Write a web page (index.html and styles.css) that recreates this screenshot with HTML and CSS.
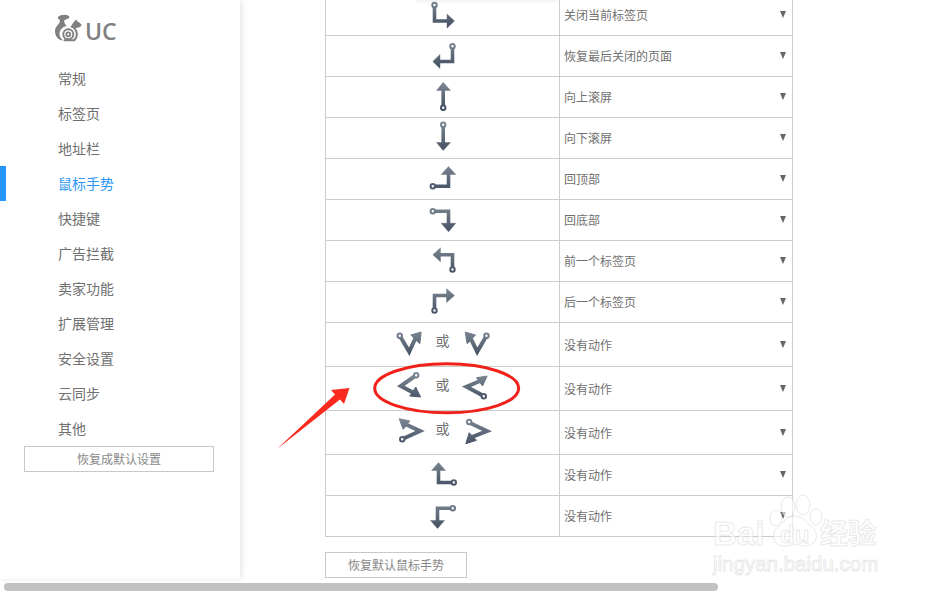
FILE: index.html
```html
<!DOCTYPE html>
<html lang="zh-CN">
<head>
    <meta charset="utf-8">
    <title>UC 设置</title>
    <link rel="stylesheet" href="styles.css">
</head>
<body>
    <svg class="defs" width="0" height="0">
        <defs>
            <linearGradient id="ico" gradientUnits="userSpaceOnUse" x1="0" y1="2" x2="0" y2="30">
                <stop offset="0" stop-color="#7b8693"/>
                <stop offset="1" stop-color="#3f4c5e"/>
            </linearGradient>
        </defs>
    </svg>

    <div class="page">
        <div class="sidebar">
            <div class="logo">
                <svg width="28" height="28" viewBox="0 0 28 28">
                    <!-- tail -->
                    <path d="M4 3 C7 0 14 0 15.500 3 C15.500 5 12 5 10.500 6 C9.500 8 11 10 12.500 12 C8 13 5.500 16 5.500 20 C5.500 23.500 8 26 11 26.800 C4 26.800 1 22 1 17 C1 12 6 10 6 7 C6 5 3 5 4 3 Z" fill="#808080"/>
                    <!-- head -->
                    <path d="M16.500 13 L19 9 C20 8 21 6.500 22 5.500 L23.500 7.500 C25 8 27 10 27.700 11 C27 13 24 14 22 14 C20 14.500 18 14.300 16.500 13 Z" fill="#808080"/>
                    <!-- body rings -->
                    <circle cx="14.300" cy="20.300" r="2" fill="none" stroke="#808080" stroke-width="1.700"/>
                    <circle cx="14.300" cy="20.300" r="5" fill="none" stroke="#808080" stroke-width="1.900"/>
                    <path d="M19.800 13.800 A8.500 8.500 0 0 1 19.800 26.800 M10 26.300 H20" fill="none" stroke="#808080" stroke-width="1.900"/>
                </svg>
                <span class="logo-text">UC</span>
            </div>
            <ul class="nav">
                <li>常规</li>
                <li>标签页</li>
                <li>地址栏</li>
                <li class="active">鼠标手势</li>
                <li>快捷键</li>
                <li>广告拦截</li>
                <li>卖家功能</li>
                <li>扩展管理</li>
                <li>安全设置</li>
                <li>云同步</li>
                <li>其他</li>
            </ul>
            <button class="btn btn-reset-all">恢复成默认设置</button>
        </div>

        <div class="main">
            <table class="gestures">
                <tr>
                    <td class="gesture">
                        <svg class="ico" width="32" height="32" fill="url(#ico)" stroke="url(#ico)">
                            <path class="line" d="M7.500 7V22H21"/><polygon class="head" points="20,15 27.500,22 20,29"/><circle class="dot" cx="7.500" cy="6" r="2.200"/>
                        </svg>
                    </td>
                    <td class="action"><div class="select">关闭当前标签页</div></td>
                </tr>
                <tr>
                    <td class="gesture">
                        <svg class="ico" width="32" height="32" fill="url(#ico)" stroke="url(#ico)">
                            <path class="line" d="M25.500 7V21.500H12"/><polygon class="head" points="13,14.500 5.800,21.500 13,28.500"/><circle class="dot" cx="25.500" cy="6.200" r="2.200"/>
                        </svg>
                    </td>
                    <td class="action"><div class="select">恢复最后关闭的页面</div></td>
                </tr>
                <tr>
                    <td class="gesture">
                        <svg class="ico" width="32" height="32" fill="url(#ico)" stroke="url(#ico)">
                            <path class="line" d="M16.200 9V26"/><polygon class="head" points="9.500,9.500 16.200,1.200 23.500,9.500"/><circle class="dot" cx="16.200" cy="26.800" r="2.200"/>
                        </svg>
                    </td>
                    <td class="action"><div class="select">向上滚屏</div></td>
                </tr>
                <tr>
                    <td class="gesture">
                        <svg class="ico" width="32" height="32" fill="url(#ico)" stroke="url(#ico)">
                            <path class="line" d="M16.200 4V21"/><polygon class="head" points="9.500,20.500 16.200,28.500 23.500,20.500"/><circle class="dot" cx="16.200" cy="2.800" r="2.200"/>
                        </svg>
                    </td>
                    <td class="action"><div class="select">向下滚屏</div></td>
                </tr>
                <tr>
                    <td class="gesture">
                        <svg class="ico" width="32" height="32" fill="url(#ico)" stroke="url(#ico)">
                            <path class="line" d="M7 23.200H21.500V11"/><polygon class="head" points="14.200,11.500 21.500,3.500 28.800,11.500"/><circle class="dot" cx="5.800" cy="23.200" r="2.200"/>
                        </svg>
                    </td>
                    <td class="action"><div class="select">回顶部</div></td>
                </tr>
                <tr>
                    <td class="gesture">
                        <svg class="ico" width="32" height="32" fill="url(#ico)" stroke="url(#ico)">
                            <path class="line" d="M7 7.200H21.500V20"/><polygon class="head" points="14.200,19.200 21.500,27.800 28.800,19.200"/><circle class="dot" cx="5.800" cy="7.200" r="2.200"/>
                        </svg>
                    </td>
                    <td class="action"><div class="select">回底部</div></td>
                </tr>
                <tr>
                    <td class="gesture">
                        <svg class="ico" width="32" height="32" fill="url(#ico)" stroke="url(#ico)">
                            <path class="line" d="M25.500 23V9.800H13"/><polygon class="head" points="13.500,2.800 5.800,9.800 13.500,16.800"/><circle class="dot" cx="25.500" cy="24.500" r="2.200"/>
                        </svg>
                    </td>
                    <td class="action"><div class="select">前一个标签页</div></td>
                </tr>
                <tr>
                    <td class="gesture">
                        <svg class="ico" width="32" height="32" fill="url(#ico)" stroke="url(#ico)">
                            <path class="line" d="M7.500 23V9.500H20"/><polygon class="head" points="19.500,2.500 27.500,9.500 19.500,16.500"/><circle class="dot" cx="7.500" cy="24.500" r="2.200"/>
                        </svg>
                    </td>
                    <td class="action"><div class="select">后一个标签页</div></td>
                </tr>
                <tr class="tall">
                    <td class="gesture">
                        <div class="pair">
                            <svg class="ico" width="32" height="32" fill="url(#ico)" stroke="url(#ico)">
                                <path class="line" d="M6.500 8L15.200 22.700L22 8"/><polygon class="head" points="27.200,3 16.800,6 25.800,14.700"/><circle class="dot" cx="5.800" cy="6.700" r="2.200"/>
                            </svg>
                            <span class="or">或</span>
                            <svg class="ico" width="32" height="32" fill="url(#ico)" stroke="url(#ico)">
                                <path class="line" d="M25.800 8L17.200 22.700L10 8"/><polygon class="head" points="5.200,3 15.500,6 7.200,14.700"/><circle class="dot" cx="26.500" cy="6.700" r="2.200"/>
                            </svg>
                        </div>
                    </td>
                    <td class="action"><div class="select">没有动作</div></td>
                </tr>
                <tr class="tall">
                    <td class="gesture">
                        <div class="pair">
                            <svg class="ico" width="32" height="32" fill="url(#ico)" stroke="url(#ico)">
                                <path class="line" d="M21 3L6.800 13L20 20"/><polygon class="head" points="26.500,24 15.800,23 21.800,14"/><circle class="dot" cx="22.200" cy="2.300" r="2.200"/>
                            </svg>
                            <span class="or">或</span>
                            <svg class="ico" width="32" height="32" fill="url(#ico)" stroke="url(#ico)">
                                <path class="line" d="M20 8L6.500 13.700L22.800 22.500"/><polygon class="head" points="27.200,3 16.500,4.700 22.500,13"/><circle class="dot" cx="23.800" cy="23.300" r="2.200"/>
                            </svg>
                        </div>
                    </td>
                    <td class="action"><div class="select">没有动作</div></td>
                </tr>
                <tr class="tall">
                    <td class="gesture">
                        <div class="pair">
                            <svg class="ico" width="32" height="32" fill="url(#ico)" stroke="url(#ico)">
                                <path class="line" d="M11 7L26 14L9.500 21.500"/><polygon class="head" points="5.200,1.700 15.800,4 9.200,12.300"/><circle class="dot" cx="8.200" cy="22.300" r="2.200"/>
                            </svg>
                            <span class="or">或</span>
                            <svg class="ico" width="32" height="32" fill="url(#ico)" stroke="url(#ico)">
                                <path class="line" d="M10 6L27 14L12 20"/><polygon class="head" points="5.800,26.700 9.200,15.700 16.500,23.300"/><circle class="dot" cx="9.200" cy="5" r="2.200"/>
                            </svg>
                        </div>
                    </td>
                    <td class="action"><div class="select">没有动作</div></td>
                </tr>
                <tr>
                    <td class="gesture">
                        <svg class="ico" width="32" height="32" fill="url(#ico)" stroke="url(#ico)">
                            <path class="line" d="M11.500 11V23.500H25.500"/><polygon class="head" points="4.500,11.500 11.500,3.500 18.500,11.500"/><circle class="dot" cx="26.800" cy="23.500" r="2.200"/>
                        </svg>
                    </td>
                    <td class="action"><div class="select">没有动作</div></td>
                </tr>
                <tr>
                    <td class="gesture">
                        <svg class="ico" width="32" height="32" fill="url(#ico)" stroke="url(#ico)">
                            <path class="line" d="M24.500 8.200H10.500V21"/><polygon class="head" points="3.500,20.500 10.500,28.500 17.500,20.500"/><circle class="dot" cx="25.800" cy="8.200" r="2.200"/>
                        </svg>
                    </td>
                    <td class="action"><div class="select">没有动作</div></td>
                </tr>
            </table>
            <button class="btn btn-reset-gesture">恢复默认鼠标手势</button>
        </div>
    </div>

    <div class="menu-edge"></div>
    <div class="scrollbar"></div>

    <!-- red annotation and the site watermark lie over the page -->
    <svg class="overlay" width="931" height="595">
        <g class="watermark">
            <ellipse cx="788" cy="507" rx="7" ry="10"/>
            <ellipse cx="803" cy="505" rx="7" ry="10"/>
            <ellipse cx="776" cy="518" rx="6" ry="8"/>
            <ellipse cx="816" cy="517" rx="6" ry="8"/>
            <path d="M795 516 C803 516 806 523 812 527 C819 533 818 545 806 546 C800 546 797 544 795 544 C792 544 788 547 782 546 C772 544 771 533 778 527 C784 522 787 516 795 516 Z"/>
            <text class="wm-big" x="713" y="545">Bai</text>
            <text class="wm-du" x="780" y="543">du</text>
            <text class="wm-cn" x="820" y="544">经验</text>
            <text class="wm-url" x="713" y="571">jingyan.baidu.com</text>
        </g>
        <ellipse class="circle-mark" cx="446.700" cy="388.300" rx="72" ry="24.500"/>
        <polygon class="arrow-mark" points="277,449 335,394.500 331,390 349.500,388 344,404 340,399.500"/>
    </svg>
</body>
</html>
```
FILE: styles.css
```css
html, body {
    margin: 0;
    height: 100%;
    overflow: hidden;
    background-color: #fff;
}
body {
    font-family: "Noto Sans CJK SC", "Liberation Sans", sans-serif;
    color: #707070;
}
.defs {
    position: absolute;
}
.page {
    display: flex;
    height: 579px;
}

/* left menu */
.sidebar {
    width: 240px;
    flex-shrink: 0;
    height: 579px;
    box-shadow: 2px 0 6px rgba(0, 0, 0, 0.1);
}
.logo {
    display: flex;
    align-items: center;
    gap: 3px;
    padding: 14px 0 0 54px;
    height: 28px;
}
.logo-text {
    font-family: "Open Sans", sans-serif;
    font-size: 23px;
    font-weight: 600;
    line-height: 28px;
    padding-top: 5px;
    color: #7f7f7f;
}
.nav {
    list-style: none;
    margin: 19px 0 0;
    padding: 0;
}
.nav li {
    height: 35px;
    line-height: 35px;
    padding-left: 58px;
    font-size: 14px;
    color: #707070;
}
.nav li.active {
    color: #2b96f8;
    box-shadow: inset 6px 0 0 #2396fb;
}
.btn {
    display: block;
    padding: 0;
    height: 26px;
    background-color: #fff;
    border: 1px solid #c8c8c8;
    font-family: inherit;
    font-size: 12px;
    line-height: 24px;
    color: #888;
}
.btn-reset-all {
    width: 190px;
    margin: 0 0 0 24px;
}

/* gesture table */
.main {
    padding-left: 85px;
}
.gestures {
    width: 468px;
    margin-top: -6px;
    border-collapse: collapse;
    table-layout: fixed;
}
.gestures tr {
    height: 41px;
}
.gestures tr.tall {
    height: 44px;
}
.gestures td {
    border: 1px solid #ccc;
    padding: 0;
}
.gesture {
    width: 233px;
    text-align: center;
}
.ico {
    display: block;
    margin: 0 auto;
    overflow: visible;
}
.line {
    fill: none;
    stroke-width: 3.600;
}
.head {
    stroke-width: 0.400;
}
.dot {
    fill: #fff;
    stroke-width: 2;
}
.pair {
    display: flex;
    justify-content: center;
    align-items: center;
    gap: 10px;
}
.pair .ico {
    margin: 0;
}
.pair .line {
    stroke-width: 4;
}
.pair .head {
    stroke-width: 1;
}
.or {
    font-size: 14px;
    line-height: 14px;
    width: 14px;
    padding-bottom: 10px;
    color: #707070;
}
.action {
    font-size: 12px;
}
.select {
    display: flex;
    justify-content: space-between;
    padding: 0 6px 0 4px;
    line-height: 18px;
    color: #707070;
}
.select::after {
    content: "";
    width: 0;
    height: 0;
    margin: 5px 0 0;
    border-top: 7px solid #666;
    border-left: 3.500px solid transparent;
    border-right: 3.500px solid transparent;
}
.btn-reset-gesture {
    width: 142px;
    margin-top: 15px;
}

/* bits lying over the page */
.menu-edge {
    position: absolute;
    top: -3px;
    left: 416px;
    width: 140px;
    height: 3px;
    box-shadow: 0 0 4px rgba(0, 0, 0, 0.15);
}
.scrollbar {
    position: absolute;
    left: 4px;
    top: 583px;
    width: 714px;
    height: 8px;
    border-radius: 4px;
    background-color: #c1c1c1;
}
.overlay {
    position: absolute;
    left: 0;
    top: 0;
    pointer-events: none;
}
.watermark {
    fill: rgba(255, 255, 255, 0.6);
    stroke: rgba(205, 205, 205, 0.45);
    stroke-width: 1;
}
.watermark text {
    font-family: "Liberation Sans", sans-serif;
}
.wm-big {
    font-size: 33px;
    font-weight: bold;
}
.wm-du {
    font-size: 24px;
    font-weight: bold;
}
.watermark .wm-cn {
    font-family: "Noto Sans CJK SC", sans-serif;
    font-size: 28px;
    font-weight: bold;
}
.wm-url {
    font-size: 20.500px;
}
.circle-mark {
    fill: none;
    stroke: #f0211a;
    stroke-width: 3;
}
.arrow-mark {
    fill: #fb2a1e;
}
```
